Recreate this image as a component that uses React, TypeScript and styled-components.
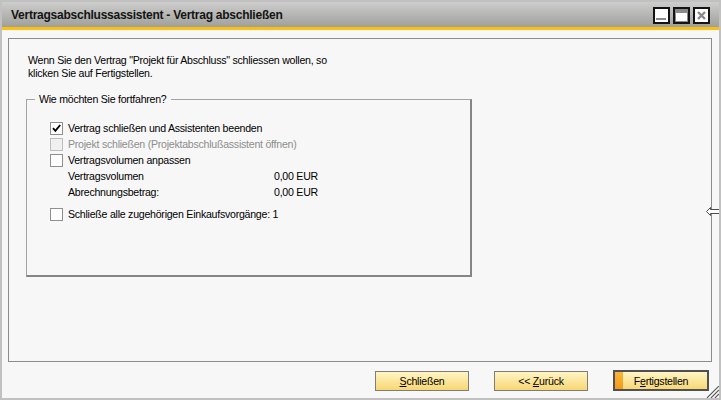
import React from 'react';
import styled, { createGlobalStyle } from 'styled-components';

const GlobalStyle = createGlobalStyle`
  html, body { margin: 0; padding: 0; background: #f7f7f7; }
  body {
    font-family: "Liberation Sans", Arial, sans-serif;
    font-size: 10.6px;
    letter-spacing: -0.25px;
    color: #000;
  }
  * { box-sizing: border-box; }
`;

const Window = styled.div`
  position: relative;
  width: 721px;
  height: 400px;
  border: 2px solid #c1c1c1;
  background: #f7f7f7;
  display: flex;
  flex-direction: column;
  overflow: hidden;
`;

const TitleBar = styled.div`
  height: 25px;
  flex: none;
  display: flex;
  align-items: center;
  padding: 0 9px;
  background: linear-gradient(#cdcdcd, #9f9f9b);
`;

const Title = styled.div`
  flex: 1;
  font-weight: bold;
  font-size: 12px;
  letter-spacing: -0.25px;
  color: #141414;
`;

const ChromeButtons = styled.div`
  display: flex;
  gap: 3px;
  margin-top: 1px;
`;

const ChromeButton = styled.div`
  width: 17px;
  height: 17px;
  border: 2px solid #141414;
  background: #fff;
  display: flex;
  align-items: center;
  justify-content: center;
`;

const Accent = styled.div`
  flex: none;
  height: 3px;
  background: #fdbf10;
`;

const Body = styled.div`
  flex: 1;
  display: flex;
  flex-direction: column;
  padding: 8px 7px 0 6px;
`;

const Panel = styled.div`
  flex: 1;
  border: 1px solid #8c8c8c;
  padding: 15px 0 0 17px;
  display: flex;
  flex-direction: column;
  align-items: flex-start;
`;

const Intro = styled.div`
  margin-left: 2px;
  line-height: 13px;
`;

const GroupBox = styled.fieldset`
  margin: 13px 0 0 0;
  padding: 0;
  width: 446px;
  height: 184px;
  min-inline-size: 0;
  border-style: solid;
  border-width: 1px 2px 2px 1px;
  border-color: #a3a3a3 #858585 #858585 #a3a3a3;
`;

const Legend = styled.legend`
  margin-left: 8px;
  padding: 0 4px;
  line-height: 13px;
`;

const Options = styled.div`
  padding: 14px 0 0 23px;
  display: flex;
  flex-direction: column;
`;

const Row = styled.div<{ $gap?: number }>`
  display: flex;
  align-items: center;
  height: 16px;
  margin-top: ${p => p.$gap ?? 0}px;
`;

const CheckBox = styled.span<{ $disabled?: boolean }>`
  width: 13px;
  height: 13px;
  flex: none;
  border: 1px solid ${p => (p.$disabled ? '#bdbdbd' : '#8e8f8f')};
  background: ${p => (p.$disabled ? '#f0f0f0' : '#fff')};
  display: flex;
  align-items: center;
  justify-content: center;
`;

const Label = styled.span<{ $disabled?: boolean }>`
  margin-left: 5px;
  color: ${p => (p.$disabled ? '#8d8d8d' : '#000')};
  white-space: nowrap;
`;

const ValueRow = styled.div`
  display: grid;
  grid-template-columns: 206px auto;
  align-items: center;
  height: 16px;
  padding-left: 18px;
`;

const Footer = styled.div`
  flex: none;
  height: 36px;
  display: flex;
  justify-content: flex-end;
  align-items: flex-start;
  gap: 25px;
  padding: 9px 3px 0 0;
`;

const Button = styled.button<{ $default?: boolean }>`
  width: ${p => (p.$default ? 96 : 94)}px;
  height: ${p => (p.$default ? 21 : 20)}px;
  margin-top: ${p => (p.$default ? -1 : 0)}px;
  padding: 0;
  font: inherit;
  letter-spacing: inherit;
  color: #000;
  border: ${p => (p.$default ? '2px solid #505050' : '1px solid #7d7d7d')};
  background: ${p =>
    p.$default
      ? 'linear-gradient(#fbb43c, #f59c18) left / 8px 100% no-repeat, linear-gradient(#fff5c4, #f8d774)'
      : 'linear-gradient(#fff5c4, #f8d774)'};
`;

const CollapseArrow = styled.svg`
  position: absolute;
  left: 703px;
  top: 204px;
`;

const Grip = styled.svg`
  position: absolute;
  right: 0;
  bottom: 0;
`;

const Check = () => (
  <svg width="9" height="9" viewBox="0 0 9 9">
    <path d="M1 4.2 L3.4 6.8 L8.2 1" fill="none" stroke="#000" strokeWidth="1.9" />
  </svg>
);

export default function App() {
  return (
    <>
      <GlobalStyle />
      <Window>
        <TitleBar>
          <Title>Vertragsabschlussassistent - Vertrag abschließen</Title>
          <ChromeButtons>
            <ChromeButton>
              <svg width="13" height="13" viewBox="0 0 13 13">
                <rect x="1" y="9" width="10" height="2" fill="#8a8a8a" />
              </svg>
            </ChromeButton>
            <ChromeButton>
              <svg width="13" height="13" viewBox="0 0 13 13">
                <rect x="0.5" y="0.5" width="12" height="12" fill="none" stroke="#8a8a8a" />
                <rect x="0" y="0" width="13" height="4" fill="#8a8a8a" />
              </svg>
            </ChromeButton>
            <ChromeButton>
              <svg width="13" height="13" viewBox="0 0 13 13">
                <path d="M3 3 L10 10 M10 3 L3 10" stroke="#8a8a8a" strokeWidth="2.4" />
              </svg>
            </ChromeButton>
          </ChromeButtons>
        </TitleBar>
        <Accent />
        <Body>
          <Panel>
            <Intro>
              Wenn Sie den Vertrag "Projekt für Abschluss" schliessen wollen, so
              <br />
              klicken Sie auf Fertigstellen.
            </Intro>
            <GroupBox>
              <Legend>Wie möchten Sie fortfahren?</Legend>
              <Options>
                <Row>
                  <CheckBox>
                    <Check />
                  </CheckBox>
                  <Label>Vertrag schließen und Assistenten beenden</Label>
                </Row>
                <Row>
                  <CheckBox $disabled />
                  <Label $disabled>Projekt schließen (Projektabschlußassistent öffnen)</Label>
                </Row>
                <Row>
                  <CheckBox />
                  <Label>Vertragsvolumen anpassen</Label>
                </Row>
                <ValueRow>
                  <span>Vertragsvolumen</span>
                  <span>0,00 EUR</span>
                </ValueRow>
                <ValueRow>
                  <span>Abrechnungsbetrag:</span>
                  <span>0,00 EUR</span>
                </ValueRow>
                <Row $gap={6}>
                  <CheckBox />
                  <Label>Schließe alle zugehörigen Einkaufsvorgänge: 1</Label>
                </Row>
              </Options>
            </GroupBox>
          </Panel>
          <Footer>
            <Button>
              <u>S</u>chließen
            </Button>
            <Button>
              &lt;&lt; <u>Z</u>urück
            </Button>
            <Button $default>
              F<u>e</u>rtigstellen
            </Button>
          </Footer>
        </Body>
        <CollapseArrow width="15" height="11" viewBox="0 0 15 11">
          <path
            d="M1.5 5.5 L5.5 1.5 L5.5 3.5 L14.5 3.5 L14.5 7.5 L5.5 7.5 L5.5 9.5 Z"
            fill="#fff"
            stroke="#4a4a4a"
          />
        </CollapseArrow>
        <Grip width="14" height="12" viewBox="0 0 14 12">
          <path d="M2 12 L14 0 M6 12 L14 4 M10 12 L14 8" stroke="#5a5a5a" strokeWidth="1.2" />
          <path d="M3 12 L14 1 M7 12 L14 5 M11 12 L14 9" stroke="#d8d8d8" strokeWidth="0.8" />
        </Grip>
      </Window>
    </>
  );
}
